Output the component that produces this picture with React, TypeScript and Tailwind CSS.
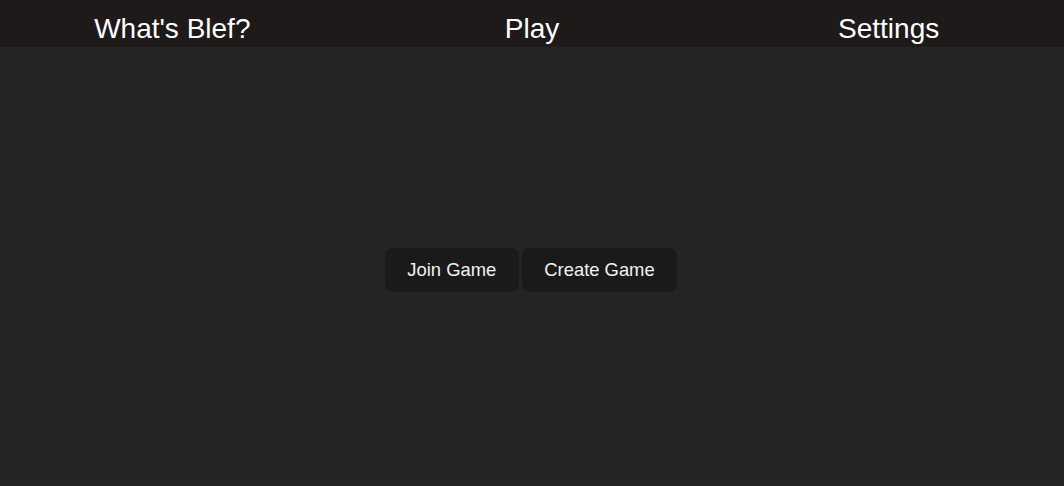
export default function App() {
  return (
    <div
      className="min-h-screen bg-[#242424] text-white"
      style={{ fontFamily: '"Liberation Sans", Arial, sans-serif' }}
    >
      {/* top navigation */}
      <nav className="grid h-[47px] grid-cols-3 bg-[#1e1a1a] pt-[13px] text-[28px] leading-[32px]">
        <span className="text-center pr-[10px]">What's Blef?</span>
        <span className="text-center">Play</span>
        <span className="text-center pl-[4px]">Settings</span>
      </nav>
      {/* game buttons */}
      <div className="flex justify-center gap-[3px] pt-[201px] pr-[2px]">
        <button className="h-[44px] rounded-lg bg-[#1a1a1a] px-[22.5px] text-[18.4px] text-[#f2f2f2]">
          Join Game
        </button>
        <button className="h-[44px] rounded-lg bg-[#1a1a1a] px-[22.5px] text-[18.4px] text-[#f2f2f2]">
          Create Game
        </button>
      </div>
    </div>
  );
}
